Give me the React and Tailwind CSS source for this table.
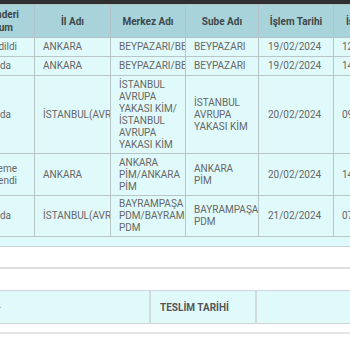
import React from 'react';

const rows = [
  { status: ['Teslim Edildi'], sPad: 'pr-[17px]', il: 'ANKARA', merkez: 'BEYPAZARI/BEYPAZARI', sube: 'BEYPAZARI', tarih: '19/02/2024', saat: '12:41', h: 'h-[19px]' },
  { status: ['Yolda'], sPad: 'pr-[23px]', il: 'ANKARA', merkez: 'BEYPAZARI/BEYPAZARI', sube: 'BEYPAZARI', tarih: '19/02/2024', saat: '14:05', h: 'h-[19px]' },
  { status: ['Yolda'], sPad: 'pr-[23px]', il: 'İSTANBUL(AVRUPA)', merkez: 'İSTANBUL AVRUPA YAKASI KİM/ İSTANBUL AVRUPA YAKASI KİM', sube: 'İSTANBUL AVRUPA YAKASI KİM', tarih: '20/02/2024', saat: '09:12', h: 'h-[78px]' },
  { status: ['Ödeme', 'Beklendi'], sPad: 'pr-[17px]', il: 'ANKARA', merkez: 'ANKARA PİM/ANKARA PİM', sube: 'ANKARA\nPİM', tarih: '20/02/2024', saat: '14:30', h: 'h-[42px]' },
  { status: ['Yolda'], sPad: 'pr-[23px]', il: 'İSTANBUL(AVRUPA)', merkez: 'BAYRAMPAŞA PDM/BAYRAMPAŞA PDM', sube: 'BAYRAMPAŞA PDM', tarih: '21/02/2024', saat: '07:48', h: 'h-[41px]' },
];

const th = 'border border-[#b3c2c4] text-center font-bold text-[10px] leading-[13px] text-[#3f4748] px-1';
const td = 'border border-[#b8c6c8] align-middle text-[10px] leading-[12px] text-[#666] overflow-hidden';

export default function App() {
  return (
    <div className="w-[350px] h-[350px] bg-white overflow-hidden font-['Roboto',sans-serif]">
      <div className="h-[4px] bg-[#2e2e2e]" />

      {/* results table, scrolled sideways */}
      <div className="overflow-hidden">
        <table className="table-fixed border-collapse ml-[-46px] w-[454px]">
          <colgroup>
            <col className="w-[80px]" />
            <col className="w-[76px]" />
            <col className="w-[75px]" />
            <col className="w-[73px]" />
            <col className="w-[75px]" />
            <col className="w-[75px]" />
          </colgroup>
          <thead>
            <tr className="h-[33px] bg-[#a8d3db]">
              <th className={`${th} text-right`}>
                <span className="block pr-[11px] whitespace-nowrap">Gönderi</span>
                <span className="block pr-[17px] whitespace-nowrap">Durum</span>
              </th>
              <th className={th}>İl Adı</th>
              <th className={th}>Merkez Adı</th>
              <th className={th}>Sube Adı</th>
              <th className={th}>İşlem Tarihi</th>
              <th className={th}>İşlem Saati</th>
            </tr>
          </thead>
          <tbody className="bg-[#e0fafc]">
            {rows.map((r, i) => (
              <tr key={i} className={r.h}>
                <td className={`${td} text-right whitespace-nowrap ${r.sPad}`}>
                  {r.status.map((s) => (
                    <span key={s} className="block">{s}</span>
                  ))}
                </td>
                <td className={`${td} pl-2 whitespace-nowrap`}>{r.il}</td>
                <td className={`${td} pl-2 pr-[2px]`}>{r.merkez}</td>
                <td className={`${td} pl-2 pr-[2px] whitespace-pre-line`}>{r.sube}</td>
                <td className={`${td} pl-[9px] whitespace-nowrap`}>{r.tarih}</td>
                <td className={`${td} pl-2 whitespace-nowrap`}>{r.saat}</td>
              </tr>
            ))}
          </tbody>
        </table>
      </div>
      <div className="h-[10px] bg-[#e0fafc] border-b border-[#c5cfd0]" />

      <div className="h-[20px]" />
      <div className="h-[2px] bg-[#dedede]" />
      <div className="h-[21px]" />

      {/* summary row */}
      <div className="flex h-[34px] bg-[#e0fafc] border-y border-[#cfd6d7] text-[10px]">
        <div className="w-[151px] flex items-center border-r-2 border-[#d3dadb] text-[#777]">
          <span className="ml-[-2px]">-</span>
        </div>
        <div className="w-[106px] flex items-center pl-[9px] border-r-2 border-[#d3dadb] font-bold text-[#555]">
          TESLİM TARİHİ
        </div>
        <div className="flex-1" />
      </div>
      <div className="h-[8px]" />
      <div className="h-[2px] bg-[#e6e6e6]" />
    </div>
  );
}
